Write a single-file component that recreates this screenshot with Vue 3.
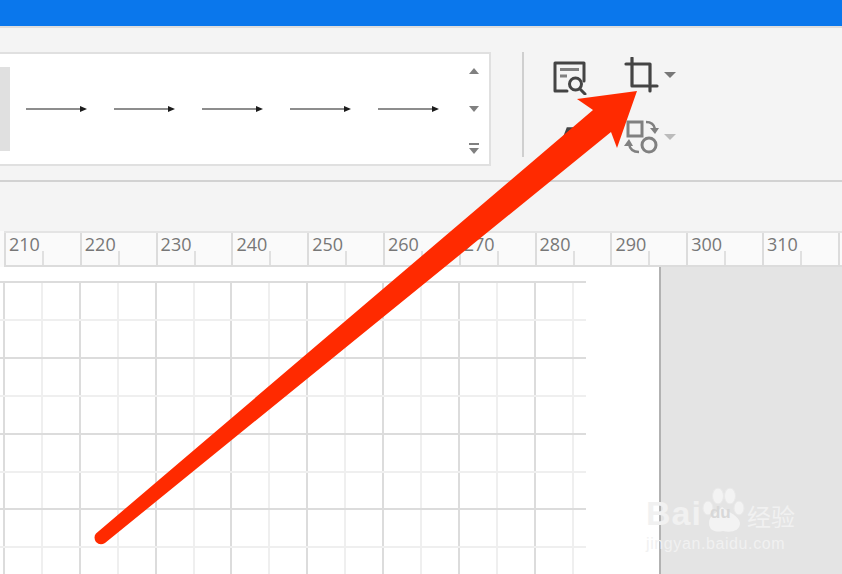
<script setup>
const arrows = [0, 1, 2, 3, 4];

// ruler: one labelled cell per 10 units, first label 210
const rulerCells = [200, 210, 220, 230, 240, 250, 260, 270, 280, 290, 300, 310, 320];

const GRID_STEP = 37.9;
const gridV = Array.from({ length: 16 }, (_, i) => i);
const gridH = Array.from({ length: 8 }, (_, i) => i);
</script>

<template>
  <div class="page">
    <div class="titlebar"></div>

    <div class="toolbar">
      <div class="gallery">
        <div class="swatch"></div>
        <div class="lines">
          <svg v-for="a in arrows" :key="a" class="line" width="62" height="10" viewBox="0 0 62 10">
            <path d="M0 5H54" stroke="#1c1c1c" stroke-width="1.2" fill="none" />
            <path d="M54 2L61 5L54 8Z" fill="#1c1c1c" />
          </svg>
        </div>
        <div class="scroller">
          <svg width="14" height="10" viewBox="0 0 14 10"><path d="M2 8L7 2L12 8Z" fill="#808080" /></svg>
          <svg width="14" height="10" viewBox="0 0 14 10"><path d="M2 2L12 2L7 8Z" fill="#808080" /></svg>
          <svg width="14" height="14" viewBox="0 0 14 14">
            <path d="M2 1H12V3H2Z" fill="#808080" />
            <path d="M2 6L12 6L7 12Z" fill="#808080" />
          </svg>
        </div>
      </div>

      <div class="divider"></div>

      <div class="tools">
        <div class="tool-row">
          <svg class="tool" width="36" height="36" viewBox="0 0 36 36">
            <path d="M16 32H4V4H33V22" fill="none" stroke="#444" stroke-width="3" stroke-linejoin="round" stroke-linecap="round" />
            <path d="M9 10.5H28" stroke="#808080" stroke-width="3" />
            <path d="M9 17H16" stroke="#808080" stroke-width="3" />
            <circle cx="24.500" cy="25" r="6" fill="none" stroke="#444" stroke-width="3" />
            <path d="M29 30L34 35" stroke="#444" stroke-width="3" stroke-linecap="round" />
          </svg>
          <div class="crop">
            <svg width="36" height="36" viewBox="0 0 36 36">
              <path d="M2 7H26V27" fill="none" stroke="#444" stroke-width="3.2" stroke-linecap="round" stroke-linejoin="round" />
              <path d="M8 1V29H33" fill="none" stroke="#444" stroke-width="3.2" stroke-linecap="round" stroke-linejoin="round" />
              <path d="M26 29V34" stroke="#444" stroke-width="3.2" stroke-linecap="round" />
            </svg>
            <span class="caret"></span>
          </div>
        </div>
        <div class="tool-row second">
          <svg class="tool letter" width="36" height="30" viewBox="0 0 36 30">
            <path d="M3 28L13 2L17 2L24 20" fill="none" stroke="#444" stroke-width="3.5" />
          </svg>
          <div class="crop">
            <svg width="36" height="36" viewBox="0 0 36 36">
              <rect x="4" y="3" width="14" height="14" fill="none" stroke="#808080" stroke-width="3" />
              <circle cx="25" cy="26" r="7" fill="none" stroke="#808080" stroke-width="3" />
              <path d="M22 3C27 3 30 5 31 10" fill="none" stroke="#808080" stroke-width="2.500" />
              <path d="M26 9H35L31 15Z" fill="#808080" />
              <path d="M15 33C10 33 6 31 5 25" fill="none" stroke="#808080" stroke-width="2.500" />
              <path d="M0 27H9L5 20Z" fill="#808080" />
            </svg>
            <span class="caret light"></span>
          </div>
        </div>
      </div>
    </div>

    <div class="band"></div>

    <div class="ruler">
      <div v-for="n in rulerCells" :key="n" class="cell">
        <span class="num">{{ n }}</span>
        <i class="minor"></i>
      </div>
    </div>

    <div class="workspace">
      <div class="sheet">
        <div class="grid">
          <i v-for="v in gridV" :key="'v' + v" class="gv" :class="{ major: v % 2 === 0 }" :style="{ left: v * GRID_STEP + 'px' }"></i>
          <i v-for="h in gridH" :key="'h' + h" class="gh" :class="{ major: h % 2 === 0 }" :style="{ top: h * GRID_STEP + 'px' }"></i>
        </div>
      </div>
      <div class="outside"></div>
    </div>

    <!-- annotation drawn over the screenshot -->
    <svg class="annotation" width="842" height="574" viewBox="0 0 842 574">
      <path d="M96 533.500L593 110L577 99L637 91L617 148L611 132L105 543Q100 546 96 542Q93 537 96 533.500Z" fill="#ff2a00" />
    </svg>

    <div class="watermark">
      <div class="wm-top">
        <span class="bai">Bai</span>
        <svg class="paw" width="44" height="46" viewBox="0 0 44 46">
          <ellipse cx="7" cy="21" rx="5" ry="7" fill="#f3f3f3" stroke="#e9e9e9" />
          <ellipse cx="17" cy="9" rx="5.500" ry="8" fill="#f3f3f3" stroke="#e9e9e9" />
          <ellipse cx="29" cy="9" rx="5.500" ry="8" fill="#f3f3f3" stroke="#e9e9e9" />
          <ellipse cx="38" cy="21" rx="5" ry="7" fill="#f3f3f3" stroke="#e9e9e9" />
          <path d="M8 36C8 28 16 26 21 20C26 25 38 28 39 36C39 44 30 46 22 44C14 46 8 43 8 36Z" fill="#f3f3f3" />
        </svg>
        <span class="du">du</span>
        <span class="cn">经验</span>
      </div>
      <div class="wm-url">jingyan.baidu.com</div>
    </div>
  </div>
</template>

<style scoped>
.page {
  position: relative;
  width: 842px;
  height: 574px;
  overflow: hidden;
  background: #f4f4f4;
  font-family: "Open Sans", "Noto Sans", sans-serif;
}

.titlebar {
  height: 26px;
  background: #0a77ec;
  border-bottom: 2px solid #dedede;
}

.toolbar {
  height: 152px;
  display: flex;
  align-items: flex-start;
  border-bottom: 2px solid #d2d2d2;
}

.gallery {
  width: 489px;
  height: 110px;
  margin-top: 24px;
  background: #fff;
  border: 2px solid #e0e0e0;
  border-left: 0;
  display: flex;
  align-items: center;
}

.swatch {
  width: 10px;
  height: 84px;
  background: #e0e0e0;
}

.lines {
  display: flex;
  gap: 26px;
  margin-left: 16px;
}

.scroller {
  height: 100%;
  margin-left: 27px;
  padding: 12px 0 8px;
  box-sizing: border-box;
  display: flex;
  flex-direction: column;
  justify-content: space-between;
  align-items: center;
}

.divider {
  width: 2px;
  height: 105px;
  margin: 24px 0 0 31px;
  background: #cfcfcf;
}

.tools {
  margin: 31px 0 0 27px;
}

.tool-row {
  display: flex;
  align-items: flex-start;
  gap: 37px;
}

.second {
  margin-top: 26px;
  height: 36px;
}

.tool {
  flex: none;
}

.letter {
  margin-top: 6px;
  margin-left: 4px;
  margin-right: -4px;
}

.crop {
  display: flex;
  align-items: center;
  gap: 4px;
  margin-top: -2px;
}

.caret {
  width: 0;
  height: 0;
  border-left: 6px solid transparent;
  border-right: 6px solid transparent;
  border-top: 6px solid #777;
}

.caret.light {
  border-top-color: #bbb;
}

.band {
  height: 49px;
}

.ruler {
  height: 32px;
  display: flex;
  margin-left: 4px;
  background: #fafafa;
  border-top: 2px solid #e4e4e4;
  border-bottom: 2px solid #dcdcdc;
  box-shadow: -4px 0 0 #fafafa;
}

.cell {
  flex: none;
  position: relative;
  width: 75.8px;
  box-sizing: border-box;
  border-left: 2px solid #dcdcdc;
  padding-left: 3px;
  margin-left: 0;
}

.cell:first-child {
  display: none;
}

.num {
  display: block;
  font-size: 18px;
  line-height: 22px;
  color: #777;
}

.minor {
  position: absolute;
  left: 36px;
  bottom: 0;
  width: 2px;
  height: 14px;
  background: #e0e0e0;
}

.workspace {
  display: flex;
  height: 309px;
}

.sheet {
  width: 659px;
  background: #fff;
  border-right: 2px solid #b2b2b2;
  padding-top: 14px;
  box-sizing: content-box;
}

.outside {
  flex: 1;
  background: #e4e4e4;
}

.grid {
  position: relative;
  width: 586px;
  height: 295px;
  overflow: hidden;
  border-right: 0;
}

.gv,
.gh {
  position: absolute;
  background: #efefef;
}

.gv {
  top: 0;
  bottom: 0;
  width: 2px;
  margin-left: 3px;
}

.gh {
  left: 0;
  right: 0;
  height: 2px;
}

.gv.major,
.gh.major {
  background: #dcdcdc;
}

.annotation {
  position: absolute;
  left: 0;
  top: 0;
}

.watermark {
  position: absolute;
  left: 646px;
  top: 483px;
  color: #f1f1f1;
  font-family: "Liberation Sans", sans-serif;
}

.wm-top {
  display: flex;
  align-items: flex-end;
  height: 50px;
}

.bai {
  font-size: 34px;
  font-weight: 700;
  line-height: 40px;
  letter-spacing: 1px;
}

.paw {
  margin-left: -1px;
}

.du {
  font-size: 17px;
  font-weight: 700;
  line-height: 20px;
  color: #d8d8d8;
  margin: 0 0 10px -35px;
  width: 35px;
}

.cn {
  font-family: "Noto Sans CJK SC", sans-serif;
  font-size: 24px;
  line-height: 34px;
  margin-left: 2px;
}

.wm-url {
  font-size: 16px;
  line-height: 20px;
  letter-spacing: 0.6px;
  margin-top: 1px;
}
</style>
